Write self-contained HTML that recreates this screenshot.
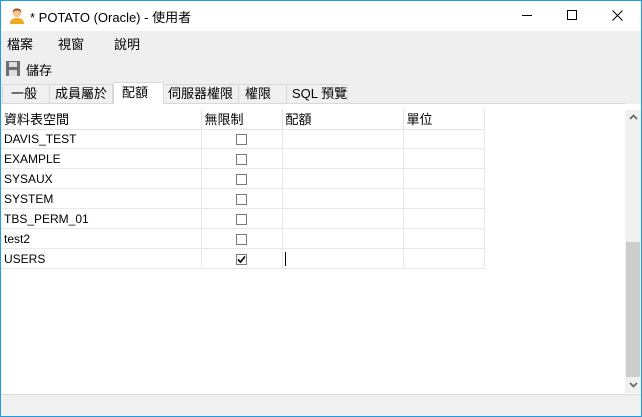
<!DOCTYPE html>
<html><head><meta charset="utf-8"><style>
*{margin:0;padding:0;box-sizing:border-box}
body{width:642px;height:417px;overflow:hidden;background:#fff;font-family:"Liberation Sans","Noto Sans CJK TC",sans-serif;font-size:12px;color:#000;position:relative}
.abs{position:absolute;white-space:nowrap}
.tab{line-height:18px}
.win{position:absolute;left:0;top:0;width:642px;height:417px;border:1px solid #1e9de6;border-top:none}
</style></head><body>
<div class="abs" style="left:0;top:0;width:642px;height:31px;background:#fff;border-top:1px solid #1e9de6"></div>
<svg class="abs" style="left:8px;top:7px" width="18" height="18" viewBox="0 0 18 18"><circle cx="9" cy="6" r="4.2" fill="#f6c48e"/><path d="M4.5 6 Q5 1 9 1.5 Q13 1 13.5 6 Q12 3.5 9 3.5 Q6 3.5 4.5 6Z" fill="#a0522d"/><path d="M2 17 Q2 11 9 11 Q16 11 16 17Z" fill="#f5a623"/></svg>
<div class="abs" style="left:30px;top:7px;font-size:13px">* POTATO (Oracle) - 使用者</div>
<div class="abs" style="left:522px;top:15px;width:10px;height:1px;background:#000"></div>
<div class="abs" style="left:567px;top:10px;width:10px;height:10px;border:1px solid #000"></div>
<svg class="abs" style="left:612px;top:10px" width="11" height="11"><path d="M0.5 0.5L10.5 10.5M10.5 0.5L0.5 10.5" stroke="#000" stroke-width="1"/></svg>
<div class="abs" style="left:0;top:31px;width:642px;height:73px;background:#efefef"></div>
<div class="abs" style="left:7px;top:34px;font-size:13px">檔案</div>
<div class="abs" style="left:58px;top:34px;font-size:13px">視窗</div>
<div class="abs" style="left:114px;top:34px;font-size:13px">說明</div>
<svg class="abs" style="left:6px;top:61px" width="14" height="15"><rect x="0" y="0" width="14" height="15" fill="#6f6f6f"/><rect x="3" y="1" width="8" height="5" fill="#ddd"/><rect x="3" y="9" width="8" height="6" fill="#ddd"/></svg>
<div class="abs" style="left:26px;top:60px;font-size:13px">儲存</div>
<div class="abs tab" style="left:2px;top:84px;width:48px;height:20px;border:1px solid #d9d9d9;background:#f0f0f0;padding-left:8px;font-size:13px">一般</div>
<div class="abs tab" style="left:50px;top:84px;width:63px;height:20px;border:1px solid #d9d9d9;border-left:none;background:#f0f0f0;padding-left:5px;font-size:13px">成員屬於</div>
<div class="abs tab" style="left:164px;top:84px;width:75px;height:20px;border:1px solid #d9d9d9;border-left:none;background:#f0f0f0;padding-left:4px;font-size:13px">伺服器權限</div>
<div class="abs tab" style="left:239px;top:84px;width:48px;height:20px;border:1px solid #d9d9d9;border-left:none;background:#f0f0f0;padding-left:6px;font-size:13px">權限</div>
<div class="abs tab" style="left:287px;top:84px;width:61px;height:20px;border:1px solid #d9d9d9;border-left:none;background:#f0f0f0;padding-left:5px;font-size:13px">SQL 預覽</div>
<div class="abs" style="left:0;top:103px;width:625px;height:1px;background:#d9d9d9"></div>
<div class="abs tab" style="left:113px;top:82px;width:51px;height:23px;border:1px solid #d9d9d9;border-bottom:none;background:#fff;padding:1px 0 0 8px;font-size:13px">配額</div>
<div class="abs" style="left:0;top:104px;width:625px;height:290px;background:#fff"></div>
<div class="abs" style="left:0;top:109px;width:485px;height:161px">
<table style="border-collapse:collapse;font-size:12px;table-layout:fixed">
<colgroup><col style="width:201px"><col style="width:81px"><col style="width:121px"><col style="width:81px"></colgroup>
<tr style="height:20px"><td style="border-right:1px solid #e4e4e4;border-bottom:1px solid #e4e4e4;padding-left:4px;font-size:13px">資料表空間</td><td style="border-right:1px solid #e4e4e4;border-bottom:1px solid #e4e4e4;padding-left:3px;font-size:13px">無限制</td><td style="border-right:1px solid #e4e4e4;border-bottom:1px solid #e4e4e4;padding-left:3px;font-size:13px">配額</td><td style="border-right:1px solid #e4e4e4;border-bottom:1px solid #e4e4e4;padding-left:3px;font-size:13px">單位</td></tr>
</table></div>
<div id="rows" class="abs" style="left:0;top:129px"></div>
<script>
var n=["DAVIS_TEST","EXAMPLE","SYSAUX","SYSTEM","TBS_PERM_01","test2","USERS"],h="";
n.forEach(function(t,i){var y=i*20;
h+='<div class="abs" style="left:0;top:'+y+'px;width:485px;height:20px;border-bottom:1px solid #e8e8e8"></div>';
h+='<div class="abs" style="left:4px;top:'+(y+3)+'px">'+t+'</div>';
h+='<div class="abs" style="left:236px;top:'+(y+5)+'px;width:11px;height:11px;border:1px solid #7a7a7a;background:#fff">'+(i==6?'<svg width="9" height="9" style="position:absolute;left:0;top:0"><path d="M1 4.5L3.5 7L8 1.5" stroke="#000" stroke-width="1.6" fill="none"/></svg>':'')+'</div>';
});
h+='<div class="abs" style="left:201px;top:0;width:1px;height:140px;background:#e8e8e8"></div>';
h+='<div class="abs" style="left:282px;top:0;width:1px;height:140px;background:#e8e8e8"></div>';
h+='<div class="abs" style="left:403px;top:0;width:1px;height:140px;background:#e8e8e8"></div>';
h+='<div class="abs" style="left:484px;top:0;width:1px;height:140px;background:#e8e8e8"></div>';
h+='<div class="abs" style="left:285px;top:123px;width:1px;height:14px;background:#000"></div>';
document.getElementById("rows").innerHTML=h;
</script>
<div class="abs" style="left:625px;top:110px;width:16px;height:283px;background:#f0f0f0"></div>
<div class="abs" style="left:626px;top:242px;width:14px;height:135px;background:#cdcdcd"></div>
<svg class="abs" style="left:629px;top:114px" width="9" height="6"><path d="M1 5L4.5 1.5L8 5" stroke="#606060" stroke-width="1.6" fill="none"/></svg>
<svg class="abs" style="left:629px;top:382px" width="9" height="6"><path d="M1 1L4.5 4.5L8 1" stroke="#606060" stroke-width="1.6" fill="none"/></svg>
<div class="abs" style="left:0;top:394px;width:642px;height:23px;background:#f0f0f0;border-top:1px solid #dadada"></div>
<div class="win"></div>
</body></html>
